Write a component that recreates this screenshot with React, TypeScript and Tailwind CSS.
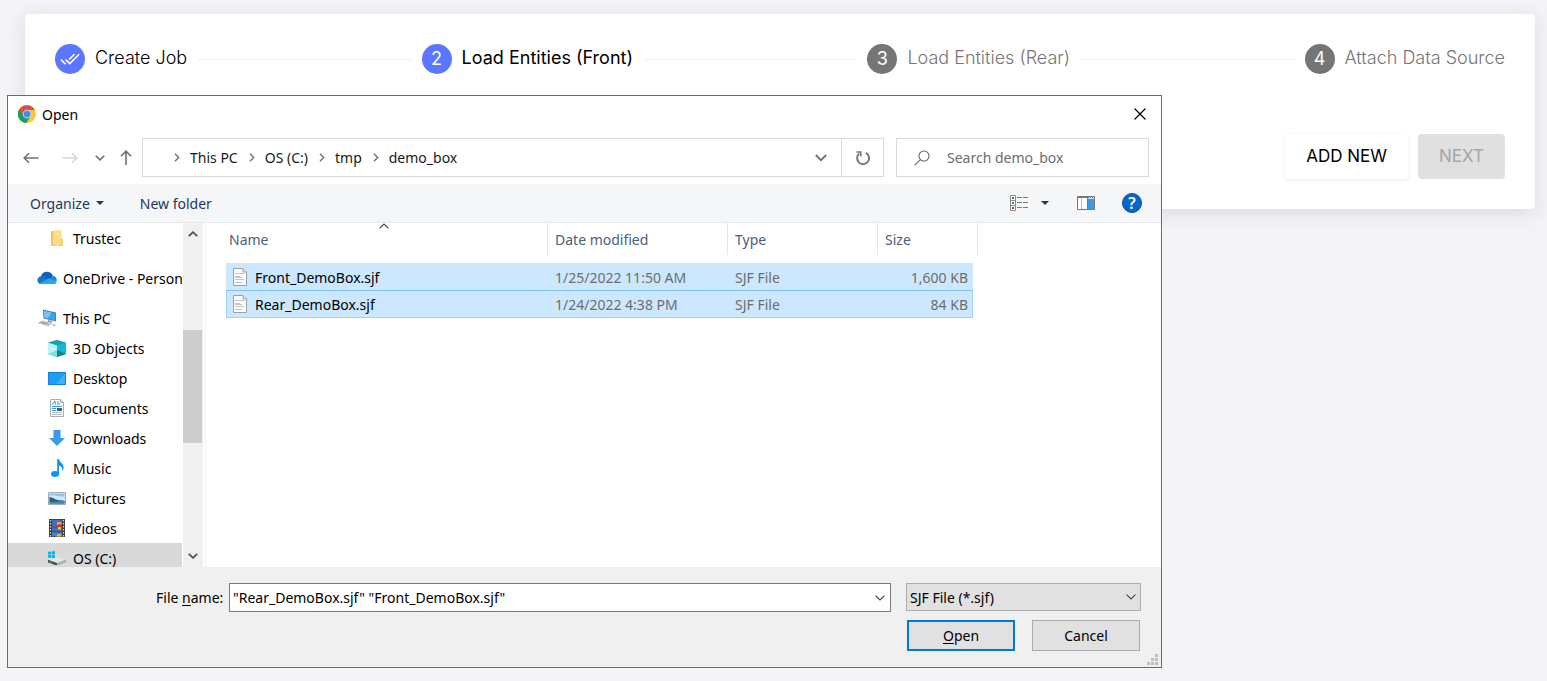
import React from 'react';

type IconProps = { className?: string };

const ChromeIcon = () => (
  <svg width="18" height="18" viewBox="0 0 18 18" aria-hidden="true">
    <circle cx="9" cy="9" r="9" fill="#f9c83a" />
    <path d="M9 9 1.2 4.5A9 9 0 0 1 16.8 4.9H9Z" fill="#dd4f43" />
    <path d="M1.2 4.5A9 9 0 0 0 8.2 18l4-7L9 9Z" fill="#1aa15f" />
    <path d="M1.2 4.5 5.4 11 9 9 9 4.9Z" fill="#dd4f43" />
    <path d="M1.2 4.5A9 9 0 0 0 8.2 18l3.5-6L5.4 11Z" fill="#1aa15f" />
    <circle cx="9" cy="9" r="4.3" fill="#b9d3f5" />
    <circle cx="9" cy="9" r="3.3" fill="#4688f1" />
  </svg>
);

const DoubleCheck = () => (
  <svg width="20" height="20" viewBox="0 0 24 24" fill="#fff" aria-hidden="true">
    <path d="m18 7-1.41-1.41-6.34 6.34 1.41 1.41L18 7zm4.24-1.41L11.66 16.17 7.48 12l-1.41 1.41L11.66 19l12-12-1.42-1.41zM.41 13.41 6 19l1.41-1.41L1.83 12 .41 13.41z" />
  </svg>
);

const ArrowLeft = () => (
  <svg width="16" height="12" viewBox="0 0 16 12" fill="none" stroke="#707070" strokeWidth="1.6" aria-hidden="true">
    <path d="M15.5 6H1.5M6 1.2 1.2 6 6 10.8" />
  </svg>
);
const ArrowRight = () => (
  <svg width="16" height="12" viewBox="0 0 16 12" fill="none" stroke="#d6d6d6" strokeWidth="1.6" aria-hidden="true">
    <path d="M.5 6h14M10 1.2 14.8 6 10 10.8" />
  </svg>
);
const ArrowUp = () => (
  <svg width="12" height="15" viewBox="0 0 12 15" fill="none" stroke="#707070" strokeWidth="1.6" aria-hidden="true">
    <path d="M6 15V1.5M1 6.3 6 1.2l5 5.1" />
  </svg>
);
const Chevron = ({ className }: IconProps) => (
  <svg className={className} width="10" height="6" viewBox="0 0 10 6" fill="none" stroke="currentColor" strokeWidth="1.8" aria-hidden="true">
    <path d="m.8.8 4.2 4 4.2-4" />
  </svg>
);
const WideChevron = () => (
  <svg width="12" height="8" viewBox="0 0 12 8" fill="none" stroke="#707070" strokeWidth="1.8" aria-hidden="true">
    <path d="m.8 1 5.200 5.200L11.200 1" />
  </svg>
);
const ThinChevron = ({ className }: IconProps) => (
  <svg className={className} width="10" height="6" viewBox="0 0 10 6" fill="none" stroke="#444" strokeWidth="1.1" aria-hidden="true">
    <path d="m.6.6 4.4 4.4L9.4.6" />
  </svg>
);
const CrumbChevron = () => (
  <svg width="6" height="9" viewBox="0 0 6 9" fill="none" stroke="#777" strokeWidth="1.5" aria-hidden="true">
    <path d="m1 .8 3.7 3.7L1 8.2" />
  </svg>
);
const Caret = () => (
  <svg width="8" height="4" viewBox="0 0 8 4" fill="#1e395b" aria-hidden="true">
    <path d="M0 0h8L4 4Z" />
  </svg>
);
const RefreshIcon = () => (
  <svg width="16" height="16" viewBox="0 0 16 16" fill="none" stroke="#777" strokeWidth="2" aria-hidden="true">
    <path d="M10.800 2.800A6 6 0 1 1 4.200 3.600" />
    <path d="M1.400 2h4.400v4.400" strokeWidth="1.600" />
  </svg>
);
const SearchIcon = () => (
  <svg width="16" height="16" viewBox="0 0 16 16" fill="none" stroke="#666" strokeWidth="1.1" aria-hidden="true">
    <circle cx="10" cy="6" r="5" />
    <path d="M6.4 9.6.6 15.2" />
  </svg>
);
const ListViewIcon = () => (
  <svg width="18" height="16" viewBox="0 0 18 16" fill="none" aria-hidden="true">
    <path d="M.5.5h5v15h-5zM.5 5.5h5M.5 10.5h5" stroke="#8c8c8c" fill="#fff" />
    <path d="M2 2h2v2H2z" fill="#2f7f9f" />
    <path d="M2 7h2v2H2z" fill="#5b8a2c" />
    <path d="M2 12h2v2H2z" fill="#b0341f" />
    <path d="M7 2.5h5M13 2.5h5M7 7.5h5M13 7.5h5M7 12.5h5M13 12.5h5" stroke="#7a7a7a" />
  </svg>
);
const PaneIcon = () => (
  <svg width="18" height="14" viewBox="0 0 18 14" aria-hidden="true">
    <path d="M.5.5h17v13H.5z" fill="#fff" stroke="#777" />
    <path d="M1 1h16v1H1z" fill="#777" />
    <path d="M12 1h1v1h-1zM14 1h1v1h-1zM16 1h1v1h-1z" fill="#eee" />
    <path d="M4 2h1v11H4z" fill="#bbb" />
    <path d="M10.500 2.600H17V13h-6.500z" fill="#3d9be6" />
    <path d="M10 2h1v11h-1z" fill="#777" />
  </svg>
);

const FolderIcon = () => (
  <svg width="12" height="17" viewBox="0 0 12 17" aria-hidden="true">
    <path d="M0 1h7v15H0z" fill="#f3c95c" />
    <path d="M3 .5 10 0l1 6v10H5L2 14Z" fill="#fbdf8b" />
    <path d="M9 9h3v7H7l2-3Z" fill="#f7d271" />
  </svg>
);
const OneDriveIcon = () => (
  <svg width="20" height="14" viewBox="0 0 20 14" aria-hidden="true">
    <path d="M4 5.200A6.200 6.200 0 0 1 15.800 4.800L14 10 4 9Z" fill="#0f61b8" />
    <path d="M1.500 12A4.300 4.300 0 0 1 4.600 4.900c2-.4 3.600.3 5 1.200l-2 6.900H4C3 13 2 12.700 1.500 12Z" fill="#1272cc" />
    <path d="M9.500 6.100 12.500 8 15.800 4.800C18.500 5.200 20.200 7.500 19.800 10l-5.500 1.500Z" fill="#1a8ad8" />
    <path d="M2 12.400 10.500 8c1-.5 2-.6 3 0l6.300 3.200A3.200 3.200 0 0 1 16.500 13H4.300c-1 0-1.700-.2-2.300-.6Z" fill="#29a7ea" />
  </svg>
);
const PcIcon = () => (
  <svg width="20" height="18" viewBox="0 0 20 18" aria-hidden="true">
    <path d="m6 .5 13 3v9L6.500 9.500Z" fill="#5b7b96" />
    <path d="m7 1.800 11 2.600v7L7.400 8.800Z" fill="#38a5ee" />
    <path d="m7 1.800 7.500 1.800-3.500 6L7.400 8.800Z" fill="#71c4f8" />
    <path d="m11 11 4 1v2l-4-1Z" fill="#8998a5" />
    <path d="m0 14 5.500-2.500L16 14l-4.500 3.500Z" fill="#c4ccd3" />
    <path d="m2 14 4-1.500M4.500 14.700l4-1.700M7 15.500l4-1.800M3.500 13.400l8 2" stroke="#8c969f" strokeWidth=".6" />
    <path d="m16.500 15 3 .5-2 2-2.500-.7Z" fill="#bcc5cd" />
  </svg>
);
const CubeIcon = () => (
  <svg width="18" height="17" viewBox="0 0 18 17" aria-hidden="true">
    <path d="M9 0 18 2.800V14l-9 3-9-3V2.800Z" fill="#37bccf" />
    <path d="M9 0 18 2.800 9 5.500 0 2.800Z" fill="#16a0b5" />
    <path d="M0 2.800 9 5.500V17l-9-3Z" fill="#7de0e4" />
    <path d="M0 2.800 9 5.500V10L0 14Z" fill="#c2f4f3" />
    <path d="M9 5.500 18 2.800V14L9 10Z" fill="#0fbcd8" />
    <path d="M9 10 18 14 9 17Z" fill="#157f93" />
  </svg>
);
const DesktopIcon = () => (
  <svg width="18" height="13" viewBox="0 0 18 13" aria-hidden="true">
    <path d="M0 0h18v13H0z" fill="#1585dc" />
    <path d="M1 1h16v11H1z" fill="#1d9cf5" />
    <path d="M17 1v11H8Z" fill="#44adf8" />
  </svg>
);
const DocIcon = () => (
  <svg width="14" height="18" viewBox="0 0 14 18" aria-hidden="true">
    <path d="M.5.500h10l3 3v14H.5z" fill="#f7f8f9" stroke="#a9aeb2" />
    <path d="M10.500.5v3h3" fill="#dfe3e6" stroke="#a9aeb2" />
    <path d="M2.500 5.500 4.800 2l1 3.500M7 3h2M7 5h3M2 7.500h10M2 9.500h4M2 11.500h4" stroke="#3f97d8" fill="none" />
    <path d="M2 13.500h10M2 15.500h10" stroke="#b5bcc2" />
    <path d="M7 9h5v3H7z" fill="#39617f" />
  </svg>
);
const DownloadIcon = () => (
  <svg width="16" height="16" viewBox="0 0 16 16" aria-hidden="true">
    <path d="M4.500 0h7v8H16l-8 8-8-8h4.500Z" fill="#3c98e8" />
  </svg>
);
const MusicIcon = () => (
  <svg width="13" height="18" viewBox="0 0 13 18" aria-hidden="true">
    <ellipse cx="4" cy="15" rx="4" ry="2.900" fill="#0c95f2" />
    <path d="M6.200 0H8c.2 3 4.800 4.500 4.600 8.500 0 1.500-.5 2.500-1.200 3.500.3-3-1-4.800-3.400-5.500V15H6.200Z" fill="#0c95f2" />
  </svg>
);
const PictureIcon = () => (
  <svg width="18" height="13" viewBox="0 0 18 13" aria-hidden="true">
    <path d="M.5.500h17v12H.5z" fill="#eef2f5" stroke="#a6acb1" />
    <path d="M1.500 1.500h15v10h-15z" fill="#8fc3ec" />
    <path d="M1.500 4c5-2 8 1 15 .5V8h-15Z" fill="#d3e9f7" />
    <path d="M1.500 5c3 0 5 2.500 8 3l7 1v2.500h-15Z" fill="#2c6076" />
    <path d="m1.500 10 15-1v2.500h-15Z" fill="#3a8cb5" />
  </svg>
);
const VideoIcon = () => (
  <svg width="16" height="18" viewBox="0 0 16 18" aria-hidden="true">
    <path d="M0 0h16v18H0z" fill="#35393d" />
    <path d="M3 .8h10v11.700H3z" fill="#3f6fc0" />
    <path d="M3 13.300h10V17.500H3z" fill="#4b83d2" />
    <path d="M1.500 1v17M14.500 1v17" stroke="#d9dde0" strokeWidth="1.200" strokeDasharray="1.500 1.500" />
    <path d="M8 3h4.500v3H8z" fill="#e9a92b" />
    <path d="M3.500 7.500h6v1.500h-6zM9 5.500h4V8H9z" fill="#c3302b" />
    <path d="M9 8h3v2.500H9z" fill="#f0c330" />
    <path d="M9 2h3v1H9zM7 10h2v1.500H7z" fill="#3b8e3d" />
    <path d="M7.500 17.500 8.500 15h3l1 2.500Z" fill="#f0b530" />
  </svg>
);
const DriveIcon = () => (
  <svg width="18" height="14" viewBox="0 0 18 14" aria-hidden="true">
    <path d="M0 .8 3.200.500v3H0zM3.800.4 7 0v3.500H3.800zM0 4h3.200v3L0 6.600zM3.800 4H7v3.500L3.800 7.100z" fill="#12b3ea" />
    <path d="m0 8.800 9-2.500 9 2.500-9 3.200Z" fill="#e4e5e6" />
    <path d="m0 8.800 9 3.200V14H7L0 11.500Z" fill="#4b4f52" />
    <path d="m9 12 9-3.200v2.400L10.500 14H9Z" fill="#a9adb0" />
    <path d="m2 10.600 1.500.500v.9L2 11.500Z" fill="#4fdc5b" />
  </svg>
);
const FileIcon = () => (
  <svg width="14" height="18" viewBox="0 0 14 18" aria-hidden="true">
    <path d="M.5.500h9.500l3.500 3.500v13.500H.5z" fill="#fbfbfb" stroke="#a0a0a0" />
    <path d="M10 .500V4h3.500" fill="#e6e6e6" stroke="#a0a0a0" />
    <path d="M2 5.500h9M2 8.500h5M2 11.500h9M2 9.500h7M2 14.500h7" stroke="#c4c4c4" />
  </svg>
);

const steps = [
  { n: 1, label: 'Create Job', state: 'done' },
  { n: 2, label: 'Load Entities (Front)', state: 'active' },
  { n: 3, label: 'Load Entities (Rear)', state: 'todo' },
  { n: 4, label: 'Attach Data Source', state: 'todo' },
];

const labelStyle: Record<string, string> = {
  done: 'font-light text-black',
  active: 'font-normal text-black',
  todo: 'font-light text-[#757575]',
};

const Stepper = () => (
  <ol className="flex items-center text-lg leading-7">
    {steps.map((s, i) => (
      <React.Fragment key={s.n}>
        {i > 0 && <li aria-hidden="true" className="mr-2.5 ml-2.5 h-px flex-1 bg-[#f3f3f3]" />}
        <li className="flex items-start gap-2.5 whitespace-nowrap">
          <span
            className={
              s.state === 'todo'
                ? 'flex size-[30px] items-center justify-center rounded-full bg-[#757575] text-white'
                : 'flex size-[30px] items-center justify-center rounded-full bg-[#5c77ff] text-white'
            }
          >
            {s.state === 'done' ? <DoubleCheck /> : s.n}
          </span>
          <span className={labelStyle[s.state]}>{s.label}</span>
        </li>
      </React.Fragment>
    ))}
  </ol>
);

const places = [
  { label: 'Trustec', icon: <FolderIcon />, style: 'mb-2.5 pl-[39px]' },
  { label: 'OneDrive - Person', icon: <OneDriveIcon />, style: 'mb-2.5 pl-[29px]' },
  { label: 'This PC', icon: <PcIcon />, style: 'pl-[29px]' },
  { label: '3D Objects', icon: <CubeIcon />, style: 'pl-[39px]' },
  { label: 'Desktop', icon: <DesktopIcon />, style: 'pl-[39px]' },
  { label: 'Documents', icon: <DocIcon />, style: 'pl-[39px]' },
  { label: 'Downloads', icon: <DownloadIcon />, style: 'pl-[39px]' },
  { label: 'Music', icon: <MusicIcon />, style: 'pl-[39px]' },
  { label: 'Pictures', icon: <PictureIcon />, style: 'pl-[39px]' },
  { label: 'Videos', icon: <VideoIcon />, style: 'pl-[39px]' },
  { label: 'OS (C:)', icon: <DriveIcon />, style: 'bg-[#d9d9d9] pl-[39px]' },
];

const Sidebar = () => (
  <div className="flex h-[344px] w-[195px] shrink-0">
    <nav className="min-w-0 flex-1 overflow-hidden" aria-label="Places">
      <ul>
        {places.map((p) => (
          <li key={p.label} className={p.style}>
            <a href="#" className="flex h-[30px] items-center gap-1.5 whitespace-nowrap">
              <span className="flex w-5 shrink-0 justify-center">{p.icon}</span>
              <span className="pt-0.5">{p.label}</span>
            </a>
          </li>
        ))}
      </ul>
    </nav>
    <div className="ml-px flex w-5 flex-col items-center justify-between bg-[#f0f0f0] py-2 pr-px text-[#505050]">
      <Chevron className="rotate-180" />
      <div className="mt-[93px] mb-auto h-[113px] w-[19px] bg-[#cdcdcd]" />
      <Chevron />
    </div>
  </div>
);

const crumbs = ['This PC', 'OS (C:)', 'tmp', 'demo_box'];

const files = [
  {
    name: 'Front_DemoBox.sjf',
    date: '1/25/2022 11:50 AM',
    size: '1,600 KB',
    row: 'h-[27px]',
    cell: 'bg-[#cce8ff] pt-0.5',
    first: 'border-l border-l-[#cce8ff]',
    last: 'border-r border-r-[#cce8ff]',
  },
  {
    name: 'Rear_DemoBox.sjf',
    date: '1/24/2022 4:38 PM',
    size: '84 KB',
    row: 'h-7',
    cell: 'border-y border-b-[#99d1ff] border-t-[#7fc4fc] bg-[#cce8ff] pt-0.5',
    first: 'border-l border-l-[#99d1ff]',
    last: 'border-r border-r-[#99d1ff]',
  },
];

const FileTable = () => (
  <table className="ml-5 w-[752px] table-fixed border-separate border-spacing-0 text-left">
    <colgroup>
      <col className="w-[322px]" />
      <col className="w-[180px]" />
      <col className="w-[150px]" />
      <col className="w-[95px]" />
      <col className="w-[5px]" />
    </colgroup>
    <thead className="text-[#4c607a]">
      <tr className="h-8">
        <th className="relative border-r border-[#e5e5e5] pt-0.5 pl-[3px] font-normal">
          Name
          <ThinChevron className="absolute top-0 left-[153px] rotate-180" />
        </th>
        <th className="border-r border-[#e5e5e5] pt-0.5 pl-[7px] font-normal">Date modified</th>
        <th className="border-r border-[#e5e5e5] pt-0.5 pl-[7px] font-normal">Type</th>
        <th colSpan={2} className="border-r border-[#e5e5e5] pt-0.5 pl-[7px] font-normal">
          Size
        </th>
      </tr>
    </thead>
    <tbody className="text-[#6d6d6d] before:block before:h-2">
      {files.map((f) => (
        <tr key={f.name} className={f.row}>
          <td className={`${f.cell} ${f.first} text-black`}>
            <span className="flex items-start gap-2 pl-1.5">
              <FileIcon />
              {f.name}
            </span>
          </td>
          <td className={`${f.cell} pl-[7px]`}>{f.date}</td>
          <td className={`${f.cell} pl-[7px]`}>SJF File</td>
          <td className={`${f.cell} ${f.last} pr-1 text-right`}>{f.size}</td>
        </tr>
      ))}
    </tbody>
  </table>
);

const OpenDialog = () => (
  <section
    role="dialog"
    aria-label="Open"
    className="absolute top-[95px] right-[385px] left-[7px] border border-[#6b6b6b] bg-white font-['Noto_Sans',sans-serif] text-sm leading-5 text-black"
  >
    <header className="flex h-[42px] items-start justify-between pt-[9px] pr-[15px] pl-2.5">
      <h2 className="flex items-start gap-1.5">
        <ChromeIcon />
        Open
      </h2>
      <button type="button" aria-label="Close" className="pt-[3px]">
        <svg width="12" height="12" viewBox="0 0 12 12" stroke="#000" strokeWidth="1.2" aria-hidden="true">
          <path d="m.5.500 11 11m0-11-11 11" />
        </svg>
      </button>
    </header>

    <div className="flex h-[39px] items-stretch pr-3 pl-[15px]">
      <div className="flex w-[119px] items-center">
        <button type="button" aria-label="Back"><ArrowLeft /></button>
        <button type="button" aria-label="Forward" className="ml-[23px]"><ArrowRight /></button>
        <button type="button" aria-label="Recent locations" className="ml-[17px] text-[#777]"><Chevron /></button>
        <button type="button" aria-label="Up" className="ml-[15px]"><ArrowUp /></button>
      </div>
      <div className="flex min-w-0 flex-1 border border-[#d9d9d9]">
        <ol className="flex flex-1 items-center gap-[11px] pl-[31px] text-[#191919]">
          {crumbs.map((c) => (
            <li key={c} className="flex items-center gap-2.5">
              <CrumbChevron />
              <a href="#">{c}</a>
            </li>
          ))}
        </ol>
        <button type="button" aria-label="Show locations" className="flex w-10 items-center justify-center">
          <WideChevron />
        </button>
        <button type="button" aria-label="Refresh" className="flex w-[42px] items-center justify-center border-l border-[#d9d9d9]">
          <RefreshIcon />
        </button>
      </div>
      <label className="ml-3 flex w-[253px] items-center gap-[17px] border border-[#d9d9d9] pl-[17px]">
        <SearchIcon />
        <input
          type="search"
          aria-label="Search demo_box"
          placeholder="Search demo_box"
          className="min-w-0 flex-1 outline-none placeholder:text-[#6d6d6d]"
        />
      </label>
    </div>

    <div className="mt-[7px] flex h-[39px] items-center border-b border-[#e5e7ea] bg-[#f5f6f7] pr-[19px] pl-[22px] text-[#1e395b]">
      <button type="button" className="flex items-center gap-1.5">
        <span className="pt-0.5">Organize</span> <Caret />
      </button>
      <button type="button" className="ml-9 pt-0.5">New folder</button>
      <button type="button" aria-label="Change view" className="ml-auto"><ListViewIcon /></button>
      <button type="button" aria-label="More view options" className="ml-[13px]"><Caret /></button>
      <button type="button" aria-label="Preview pane" className="ml-7"><PaneIcon /></button>
      <button
        type="button"
        aria-label="Help"
        className="ml-[27px] flex size-5 items-center justify-center rounded-full border border-[#0a4f94] bg-[#0567c6] text-base font-semibold text-white"
      >
        ?
      </button>
    </div>

    <div className="flex">
      <Sidebar />
      <div className="ml-0.5 min-w-0 flex-1 border-l border-[#f3f3f3]">
        <FileTable />
      </div>
    </div>

    <footer className="relative flex flex-col gap-2 bg-[#f0f0f0] pt-4 pr-5 pb-4 pl-[148px]">
      <div className="flex h-[29px] items-stretch">
        <label htmlFor="file-name" className="w-[73px] self-center whitespace-nowrap">
          File <u className="underline-offset-2">n</u>ame:
        </label>
        <div className="flex min-w-0 flex-1 border border-[#7a7a7a] bg-white">
          <input
            id="file-name"
            type="text"
            defaultValue={'"Rear_DemoBox.sjf" "Front_DemoBox.sjf"'}
            className="min-w-0 flex-1 pl-[3px] outline-none"
          />
          <button type="button" aria-label="Recent names" className="w-5 pl-[5px]"><ThinChevron /></button>
        </div>
        <div className="relative ml-[15px] h-7 w-[235px]">
          <select
            aria-label="File type"
            className="h-full w-full appearance-none border border-[#adadad] bg-[#e1e1e1] pt-px pl-[3px]"
          >
            <option>SJF File (*.sjf)</option>
          </select>
          <ThinChevron className="pointer-events-none absolute top-[11px] right-[5px]" />
        </div>
      </div>
      <div className="flex justify-end gap-[17px] pr-px">
        <button type="button" className="h-[31px] w-[108px] border-2 border-[#0078d7] bg-[#e1e1e1]">
          <u className="underline-offset-2">O</u>pen
        </button>
        <button type="button" className="h-[31px] w-[108px] border border-[#adadad] bg-[#e1e1e1]">Cancel</button>
      </div>
      <svg className="absolute right-[3px] bottom-0.5" width="11" height="11" viewBox="0 0 11 11" fill="#bdbdbd" aria-hidden="true">
        <path d="M8 0h3v3H8zM4 4h3v3H4zM8 4h3v3H8zM0 8h3v3H0zM4 8h3v3H4zM8 8h3v3H8z" />
      </svg>
    </footer>
  </section>
);

export default function App() {
  return (
    <div className="relative min-h-screen bg-[#f4f4f7] pt-3.5 pr-3 pl-[25px] font-[Inter,sans-serif]">
      <main className="rounded bg-white p-[30px] shadow-[0_4px_20px_rgba(50,40,90,0.13)]">
        <Stepper />
        <div className="mt-[60px] flex justify-end gap-2.5 text-[17px] leading-[45px]">
          <button type="button" className="h-[45px] rounded px-[21px] text-black shadow-[0_1px_4px_rgba(0,0,0,0.09)]">
            ADD NEW
          </button>
          <button type="button" disabled className="h-[45px] rounded bg-[#e0e0e0] px-[21px] text-[#a6a6a6]">
            NEXT
          </button>
        </div>
      </main>
      <OpenDialog />
    </div>
  );
}
